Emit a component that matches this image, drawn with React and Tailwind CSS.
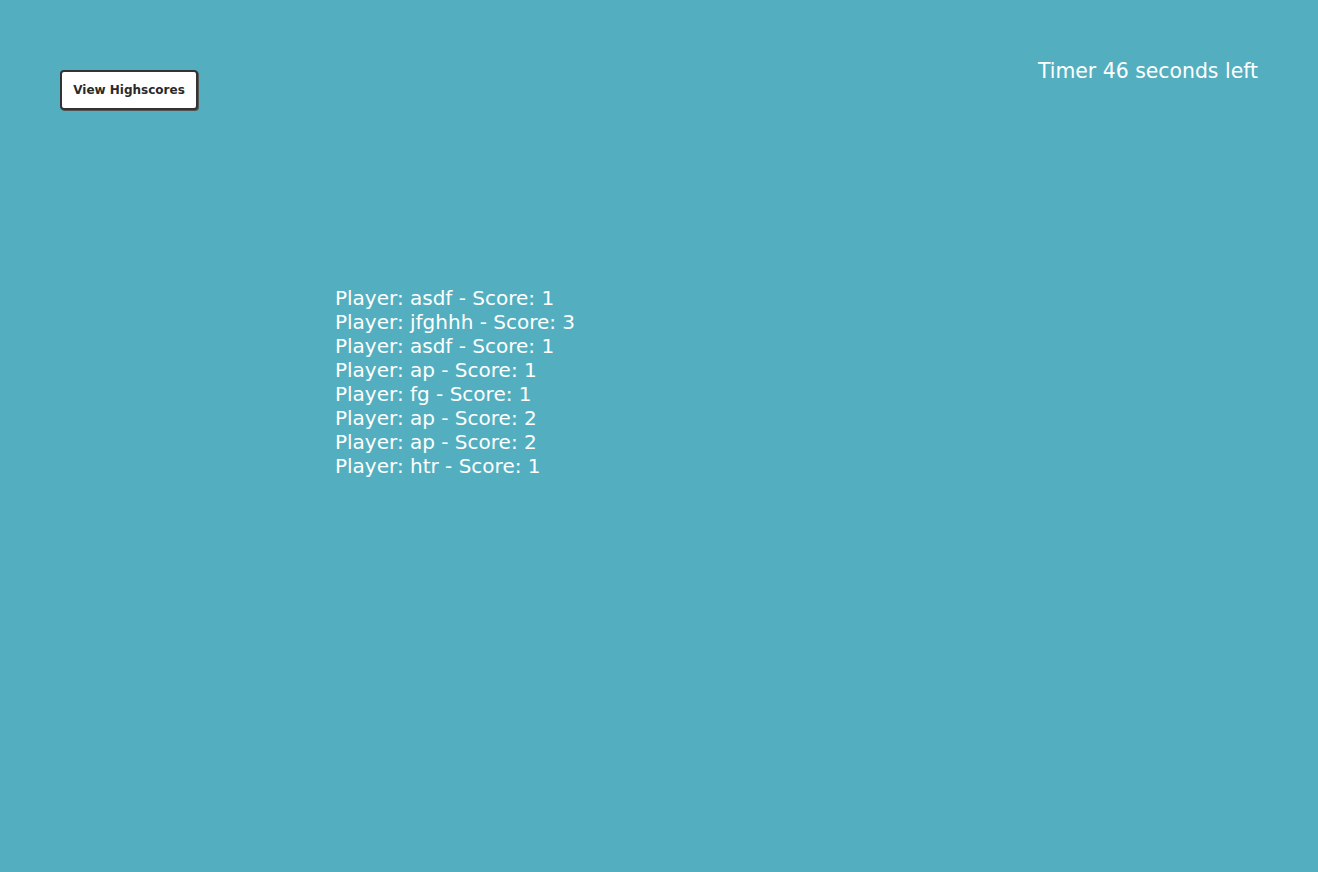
const scores = [
  { name: 'asdf', score: 1 },
  { name: 'jfghhh', score: 3 },
  { name: 'asdf', score: 1 },
  { name: 'ap', score: 1 },
  { name: 'fg', score: 1 },
  { name: 'ap', score: 2 },
  { name: 'ap', score: 2 },
  { name: 'htr', score: 1 },
];

const App = () => {
  return (
    <div className="min-h-[872px] w-full bg-[#53afbf] text-white font-['DejaVu_Sans','Noto_Sans',sans-serif]">
      {/* Header */}
      <div className="flex items-start justify-between px-[60px] pt-[58px]">
        <button className="mt-[12px] h-[40px] w-[138px] rounded-[4px] border-2 border-[#333] bg-white text-[12px] font-bold text-[#2a2a2a] shadow-[1px_1px_0_#555]">
          View Highscores
        </button>
        <p className="text-[20.4px] leading-[26px]">Timer 46 seconds left</p>
      </div>

      {/* Highscores */}
      <ul className="ml-[335px] mt-[176px] text-[20px] leading-[24px]">
        {scores.map((s, i) => (
          <li key={i}>
            Player: {s.name} - Score: {s.score}
          </li>
        ))}
      </ul>
    </div>
  );
};

export default App;
